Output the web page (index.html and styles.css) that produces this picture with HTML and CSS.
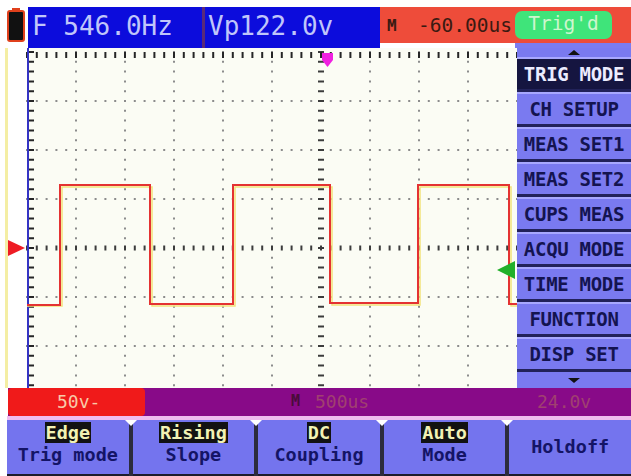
FILE: index.html
```html
<!DOCTYPE html>
<html lang="en">
<head>
	<meta charset="UTF-8">
	<title>Scope - Trig mode</title>
	<link rel="stylesheet" href="styles.css">
</head>
<body>
	<div class="topbar">
		<div class="battery">
			<svg width="18" height="34" viewBox="0 0 18 34">
				<rect x="1" y="3" width="16" height="30" rx="2" fill="#111" stroke="#e0401c" stroke-width="2"/>
				<rect x="5" y="0" width="8" height="4" fill="#e0401c"/>
			</svg>
		</div>
		<div class="readout freq">F 546.0Hz</div>
		<div class="readout volt">Vp122.0v</div>
		<div class="timebox">
			<div class="timebar">
				<span class="mark">M</span>
				<span class="offset">-60.00us</span>
				<span class="trig">Trig'd</span>
			</div>
			<div class="timestrip"><span></span></div>
		</div>
	</div>

	<div class="middle">
		<!-- 屏幕网格 -->
		<svg class="screen" width="517" height="340" viewBox="0 0 517 340">
			<rect x="27" y="0" width="490" height="340" fill="#fbfcf4"/>
			<rect x="5" y="0" width="3" height="340" fill="#f4eea4"/>
			<polygon points="8,192 25,200 8,208" fill="#ee1c24"/>
			<g transform="translate(27 0)">
				<g class="dots">
					<line x1="49" y1="3" x2="49" y2="340"/>
					<line x1="98" y1="3" x2="98" y2="340"/>
					<line x1="147" y1="3" x2="147" y2="340"/>
					<line x1="196" y1="3" x2="196" y2="340"/>
					<line x1="245" y1="3" x2="245" y2="340"/>
					<line x1="343" y1="3" x2="343" y2="340"/>
					<line x1="392" y1="3" x2="392" y2="340"/>
					<line x1="441" y1="3" x2="441" y2="340"/>
					<line x1="-1" y1="53" x2="490" y2="53"/>
					<line x1="-1" y1="102" x2="490" y2="102"/>
					<line x1="-1" y1="151" x2="490" y2="151"/>
					<line x1="-1" y1="249" x2="490" y2="249"/>
					<line x1="-1" y1="298" x2="490" y2="298"/>
				</g>
				<line class="axis-h" x1="-1" y1="200" x2="490" y2="200"/>
				<line class="axis-v" x1="294" y1="3" x2="294" y2="340"/>
				<line class="ticks-top" x1="-1" y1="7" x2="490" y2="7"/>
				<line class="ticks-left" x1="4" y1="3" x2="4" y2="340"/>
				<rect x="0" y="0" width="2" height="340" fill="#3434c4"/>
				<polyline class="wave-glow" points="0,258 35,258 35,139 125,139 125,258 208,258 208,139 305,139 305,257 393,257 393,139 484,139 484,258 490,258"/>
				<polyline class="wave" points="0,257 33,257 33,137 123,137 123,256 206,256 206,137 303,137 303,255 391,255 391,137 482,137 482,256 490,256"/>
				<polygon points="295,5 306,5 306,12 300.5,19 295,12" fill="#f020e0"/>
				<polygon points="470,222 488,213 488,231" fill="#22b02a"/>
			</g>
		</svg>

		<div class="menu">
			<div class="arrow up"></div>
			<div class="item current">TRIG MODE</div>
			<div class="item">CH SETUP</div>
			<div class="item">MEAS SET1</div>
			<div class="item">MEAS SET2</div>
			<div class="item">CUPS MEAS</div>
			<div class="item">ACQU MODE</div>
			<div class="item">TIME MODE</div>
			<div class="item">FUNCTION</div>
			<div class="item">DISP SET</div>
			<div class="arrow down"></div>
		</div>
	</div>

	<div class="status">
		<span class="range">50v-</span>
		<span class="tb-mark">M</span>
		<span class="tb">500us</span>
		<span class="level">24.0v</span>
	</div>

	<div class="softkeys">
		<div class="key"><b>Edge</b><br>Trig mode</div>
		<div class="key"><b>Rising</b><br>Slope</div>
		<div class="key"><b>DC</b><br>Coupling</div>
		<div class="key"><b>Auto</b><br>Mode</div>
		<div class="key single">Holdoff</div>
	</div>
</body>
</html>
```

FILE: styles.css
```css
*{
	padding: 0;
	margin: 0;
	box-sizing: border-box;
}
body{
	width: 631px;
	height: 476px;
	overflow: hidden;
	background: #fff;
	font-family: "DejaVu Sans Mono", "Liberation Mono", monospace;
}
/* 顶部读数 */
.topbar{
	display: flex;
	height: 48px;
	padding-top: 7px;
}
.battery{
	width: 28px;
	padding: 1px 0 0 7px;
}
.battery svg{
	display: block;
}
.readout{
	height: 41px;
	background: #0c0cdc;
	color: #c0c6fa;
	font-size: 26px;
	line-height: 38px;
	white-space: nowrap;
}
.freq{
	width: 177px;
	padding-left: 4px;
	border-right: 3px solid #5a2a78;
}
.volt{
	width: 175px;
	padding-left: 3px;
}
.timebox{
	flex: 1;
	display: flex;
	flex-direction: column;
}
.timebar{
	height: 36px;
	background: #ee4c3a;
	display: flex;
	align-items: center;
	color: #3a1a12;
	white-space: nowrap;
}
.mark{
	width: 38px;
	padding-left: 7px;
	font-size: 16px;
	font-weight: bold;
}
.offset{
	width: 97px;
	font-size: 19.5px;
}
.trig{
	width: 97px;
	height: 28px;
	border-radius: 7px;
	background: #3fe47a;
	color: #cdf6cd;
	font-size: 19.5px;
	line-height: 26px;
	text-align: center;
}
.timestrip{
	height: 5px;
	display: flex;
	justify-content: flex-end;
}
.timestrip span{
	width: 116px;
	background: #7c7cf0;
}
/* 中间屏幕 */
.middle{
	display: flex;
	height: 340px;
}
.screen{
	display: block;
}
.dots line{
	stroke: #8c8c8c;
	stroke-width: 2;
	stroke-dasharray: 2 7.8;
}
.axis-h{
	stroke: #3c3c3c;
	stroke-width: 5;
	stroke-dasharray: 2 7.8;
}
.axis-v{
	stroke: #3c3c3c;
	stroke-width: 6;
	stroke-dasharray: 2 7.8;
}
.ticks-top, .ticks-left{
	stroke: #262626;
	stroke-width: 6;
	stroke-dasharray: 2 7.8;
}
.wave{
	fill: none;
	stroke: #e43232;
	stroke-width: 2;
}
.wave-glow{
	fill: none;
	stroke: #f2e27a;
	stroke-width: 1.5;
}
/* 右侧菜单 */
.menu{
	width: 114px;
	background: #7a7af0;
	display: flex;
	flex-direction: column;
}
.arrow{
	display: flex;
	justify-content: center;
	align-items: center;
}
.arrow.up{
	height: 9px;
}
.arrow.down{
	flex: 1;
}
.arrow.up::before{
	content: "";
	border-left: 6px solid transparent;
	border-right: 6px solid transparent;
	border-bottom: 5px solid #111;
}
.arrow.down::before{
	content: "";
	border-left: 6px solid transparent;
	border-right: 6px solid transparent;
	border-top: 5px solid #111;
}
.item{
	height: 35px;
	border-top: 2px solid #a8a8ff;
	border-bottom: 3px solid #22225a;
	font-size: 19px;
	font-weight: bold;
	line-height: 30px;
	color: #141450;
	text-align: center;
	white-space: nowrap;
	letter-spacing: -0.3px;
}
.item.current{
	background: #151540;
	color: #ececff;
}
/* 状态栏 */
.status{
	display: flex;
	height: 28px;
	margin-left: 8px;
	background: #880a88;
	font-size: 18px;
	line-height: 27px;
	color: #a04070;
	white-space: nowrap;
}
.range{
	width: 137px;
	padding-left: 49px;
	border-radius: 4px;
	background: #f01a1a;
	color: #f8caa8;
}
.tb-mark{
	margin-left: 146px;
	width: 24px;
	font-size: 15px;
	font-weight: bold;
	color: #4a0c3a;
}
.tb{
	width: 222px;
}
/* 底部软键 */
.softkeys{
	display: flex;
	gap: 4px;
	height: 60px;
	margin-left: 7px;
	border-top: 4px solid #f0bcf0;
	background: #2c2c3c;
}
.key{
	flex: 1;
	position: relative;
	padding-top: 2px;
	border-bottom: 2px solid #1c1c2c;
	background: #7474ee;
	color: #141466;
	font-size: 18.5px;
	font-weight: bold;
	line-height: 22px;
	text-align: center;
	white-space: nowrap;
}
.key b{
	padding: 0 1px;
	background: #121212;
	color: #f2f2b4;
}
.key + .key::before{
	content: "";
	position: absolute;
	left: -8px;
	top: 0;
	border-left: 6px solid transparent;
	border-right: 6px solid transparent;
	border-top: 6px solid #fff;
}
.key.single{
	display: flex;
	align-items: center;
	justify-content: center;
	padding-top: 0;
}
```
